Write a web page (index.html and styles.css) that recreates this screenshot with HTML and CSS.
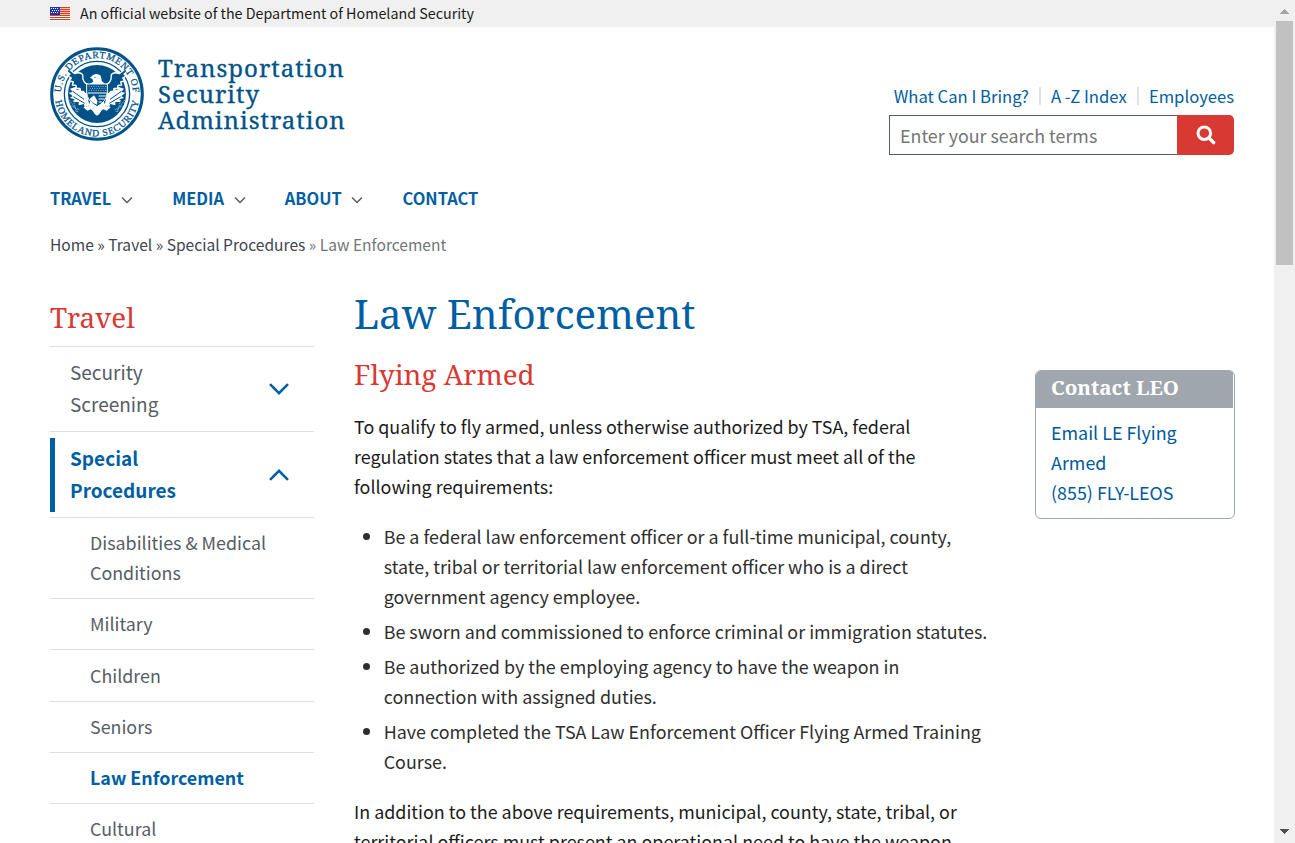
FILE: index.html
```
<!DOCTYPE html>
<html lang="en">
<head>
<meta charset="utf-8">
<title>Law Enforcement | Transportation Security Administration</title>
<link rel="stylesheet" href="styles.css">
</head>
<body>
<div class="viewport">
<div class="page">
  <div class="gov-banner">
    <svg class="flag" viewBox="0 0 20 13" width="20" height="13">
      <rect width="20" height="13" fill="#fff"/>
      <path d="M0 .5h20M0 2.5h20M0 4.5h20M0 6.5h20M0 8.5h20M0 10.5h20M0 12.5h20" stroke="#db3e1f" stroke-width="1"/>
      <path d="M0 1.5h20M0 3.5h20M0 5.5h20M0 7.5h20" stroke="#f7c4bb" stroke-width="1"/>
      <rect width="10" height="8" fill="#1e33b1"/>
      <path d="M1 1.5h8M2 3.5h7M1 5.5h8" stroke="#fff" stroke-width="1" stroke-dasharray="1 1"/>
    </svg>
    <span>An official website of the Department of Homeland Security</span>
  </div>

  <header class="header">
    <a class="brand">
      <svg class="seal" viewBox="14 15 282 282" width="94" height="94">
        <defs>
          <path id="arc-top" d="M47 156a108 108 0 0 1 216 0"/>
          <path id="arc-bottom" d="M28 156a127 127 0 0 0 254 0"/>
        </defs>
        <circle cx="155" cy="156" r="136" fill="#fff" stroke="#005288" stroke-width="9"/>
        <circle cx="155" cy="156" r="98" fill="none" stroke="#005288" stroke-width="4"/>
        <circle cx="155" cy="156" r="87" fill="#005288"/>
        <g id="wing">
          <path d="M124 150L106 140 94 144 92 134 74 140 82 150 70 152 82 162 74 168 88 172 84 180 100 180 100 190 116 186 118 196 132 190Z" fill="#fff"/>
          <path d="M82 148L116 172M84 164L118 184" stroke="#005288" stroke-width="3"/>
          <path d="M68 79L88 95Q104 88 112 98L113 112Q118 126 130 128L132 152 120 156 114 148 106 148 104 139 94 139 92 130 81 129 84 120 72 116 78 108 68 102 74 96 66 90Z" fill="#005288" stroke="#fff" stroke-width="4" stroke-linejoin="round"/>
          <path d="M72 174L100 212M84 174L94 214M74 190L104 204" stroke="#8fb3cb" stroke-width="3" stroke-dasharray="5 3" fill="none"/>
          <path d="M114 196L126 206 136 202 128 192Z" fill="#fff"/>
        </g>
        <use href="#wing" transform="matrix(-1 0 0 1 310 0)"/>
        <path d="M132 126L144 119 141 110 134 108 142 100Q155 92 166 101L170 118 180 126Z" fill="#fff"/>
        <circle cx="149" cy="106" r="2" fill="#005288"/>
        <path d="M134 180L128 196 142 206 148 216 155 221 162 216 168 206 182 196 176 180Z" fill="#fff"/>
        <path d="M124 126H186V150Q185 178 155 194Q125 178 124 150Z" fill="#005288" stroke="#fff" stroke-width="3"/>
        <path d="M130 133H182M133 139H180M130 145H182" stroke="#b9d0df" stroke-width="2.5" stroke-dasharray="3 4"/>
        <path d="M128 153H184M160 162H182M160 171H178M160 180H170" stroke="#fff" stroke-width="3"/>
        <path d="M132 172L146 160 156 176 155 188 142 182Z" fill="#fff"/>
        <g class="seal-text">
          <text><textPath href="#arc-top" startOffset="50%" text-anchor="middle" textLength="330">U.S. DEPARTMENT OF</textPath></text>
          <text><textPath href="#arc-bottom" startOffset="50%" text-anchor="middle" textLength="356">HOMELAND SECURITY</textPath></text>
        </g>
      </svg>
      <span class="brand-name"><span>Transportation</span><span>Security</span><span>Administration</span></span>
    </a>
    <div class="tools">
      <div class="quick-links"><a>What Can I Bring?</a><a>A -Z Index</a><a>Employees</a></div>
      <form class="search">
        <input type="text" placeholder="Enter your search terms">
        <button type="button" aria-label="Search">
          <svg viewBox="0 0 20 20" width="20" height="20"><circle cx="8.3" cy="8.2" r="6.3" fill="none" stroke="#fff" stroke-width="3"/><path d="M13 13L17.7 17.6" stroke="#fff" stroke-width="3.4" stroke-linecap="round"/></svg>
        </button>
      </form>
    </div>
  </header>

  <nav class="main-nav">
    <a>TRAVEL <svg viewBox="0 0 12 8" width="12" height="8"><path d="M1 1.5L6 6.5 11 1.5"/></svg></a>
    <a>MEDIA <svg viewBox="0 0 12 8" width="12" height="8"><path d="M1 1.5L6 6.5 11 1.5"/></svg></a>
    <a>ABOUT <svg viewBox="0 0 12 8" width="12" height="8"><path d="M1 1.5L6 6.5 11 1.5"/></svg></a>
    <a>CONTACT</a>
  </nav>
  <div class="breadcrumb"><a>Home</a> » <a>Travel</a> » <a>Special Procedures</a> <span>» Law Enforcement</span></div>

  <div class="columns">
    <aside class="sidebar">
      <h2>Travel</h2>
      <ul>
        <li class="top"><a>Security Screening</a><svg viewBox="0 0 20 12" width="20" height="12"><path d="M1 1.2L10 10.2 19 1.2"/></svg></li>
        <li class="top open"><a>Special Procedures</a><svg viewBox="0 0 20 12" width="20" height="12"><path d="M1 10.8L10 1.8 19 10.8"/></svg></li>
        <li><a>Disabilities &amp; Medical Conditions</a></li>
        <li><a>Military</a></li>
        <li><a>Children</a></li>
        <li><a>Seniors</a></li>
        <li class="current"><a>Law Enforcement</a></li>
        <li><a>Cultural</a></li>
      </ul>
    </aside>
    <main class="content">
      <h1>Law Enforcement</h1>
      <h2>Flying Armed</h2>
      <p>To qualify to fly armed, unless otherwise authorized by TSA, federal regulation states that a law enforcement officer must meet all of the following requirements:</p>
      <ul>
        <li>Be a federal law enforcement officer or a full-time municipal, county, state, tribal or territorial law enforcement officer who is a direct government agency employee.</li>
        <li>Be sworn and commissioned to enforce criminal or immigration statutes.</li>
        <li>Be authorized by the employing agency to have the weapon in connection with assigned duties.</li>
        <li>Have completed the TSA Law Enforcement Officer Flying Armed Training Course.</li>
      </ul>
      <p>In addition to the above requirements, municipal, county, state, tribal, or territorial officers must present an operational need to have the weapon</p>
    </main>
    <section class="card">
      <h3>Contact LEO</h3>
      <div class="card-body"><a>Email LE Flying Armed</a><a>(855) FLY-LEOS</a></div>
    </section>
  </div>
</div>
<div class="scrollbar">
  <svg viewBox="0 0 9 5" width="9" height="5"><path d="M4 0h1v1h1v1h1v1h1v1h1v1H0V4h1V3h1V2h1V1h1z" fill="#a3a3a3"/></svg>
  <div class="thumb"></div>
  <svg class="down" viewBox="0 0 9 5" width="9" height="5"><path d="M0 0h9v1H8v1H7v1H6v1H5v1H4V4H3V3H2V2H1V1H0z" fill="#505050"/></svg>
</div>
</div>
</body>
</html>
```
FILE: styles.css
```
* { box-sizing: border-box; }
html, body { margin: 0; height: 100%; overflow: hidden; }
body {
  font-family: "Noto Sans CJK SC", "Noto Sans", sans-serif;
  font-size: 17.9px;
  line-height: 30px;
  color: #1b1b1b;
  background: #fff;
}
h1, h2, h3, p, ul { margin: 0; padding: 0; font-weight: 400; }
ul { list-style: none; }
h1, h2, h3, .brand-name { font-family: "Noto Serif", "DejaVu Serif Condensed", serif; }

.viewport { display: flex; height: 843px; overflow: hidden; }
.page { width: 1274px; flex: none; overflow: hidden; }

.gov-banner {
  display: flex; align-items: center; gap: 10px;
  height: 27px; padding-left: 50px;
  background: #f0f0f0; font-size: 14.3px; line-height: 25px;
}
.gov-banner span { padding-bottom: 2px; }

.header { display: flex; justify-content: space-between; height: 128px; padding: 20px 40px 0 50px; }
.brand { display: flex; color: #005288; }
.seal-text { font-family: "Liberation Serif", serif; font-size: 29px; fill: #005288; stroke: #005288; stroke-width: .8; }
.brand-name {
  display: flex; flex-direction: column; padding: 8px 0 0 14px;
  font-size: 24px; line-height: 26px; letter-spacing: 1px;
  -webkit-text-stroke: .3px #005288;
}
.tools { display: flex; flex-direction: column; justify-content: flex-end; width: 345px; }
.quick-links { display: flex; justify-content: flex-end; font-size: 16.65px; line-height: 20px; color: #005ea2; margin-bottom: 9px; }
.quick-links a + a { margin-left: 10.7px; padding-left: 11.5px; background: linear-gradient(#dfe1e2, #dfe1e2) 0 1px / 2px 18px no-repeat; }
.search { display: flex; height: 40px; }
.search input {
  width: 288px; border: 1px solid #565c65; border-right: 0; padding: 0 10px; margin: 0;
  font-family: inherit; font-size: 17.85px; color: #1b1b1b; outline: 0;
}
.search input::placeholder { color: #757575; }
.search button {
  width: 57px; border: 0; border-radius: 0 5px 5px 0; background: #d83933;
  display: flex; align-items: center; justify-content: center; padding: 0;
}

.main-nav { display: flex; gap: 39.1px; padding: 33px 0 0 50px; font-size: 16.45px; font-weight: 700; line-height: 20px; color: #005ea2; }
.main-nav a { display: flex; align-items: center; gap: 9.7px; }
.main-nav svg { margin-top: 3px; fill: none; stroke: #565c65; stroke-width: 1.5; }
.breadcrumb { padding: 25px 0 0 50px; font-size: 15.57px; line-height: 22px; color: #3d4551; }
.breadcrumb span { color: #71767a; }

.columns { display: grid; grid-template-columns: 264px 640px 200px; column-gap: 40px; padding: 35px 0 0 50px; align-items: start; }
.sidebar { font-size: 17.87px; color: #565c65; }
.sidebar h2 { font-size: 27.8px; line-height: 34px; color: #d83933; padding: 10px 0 11.7px; }
.sidebar li { border-top: 1px solid #dcdee0; padding: 9.25px 40px 11px; }
.sidebar .top {
  display: flex; align-items: center; justify-content: space-between;
  font-size: 19px; line-height: 32px; padding: 9.3px 25px 11.3px 20px;
}
.sidebar .top a { width: 130px; }
.sidebar svg { margin-top: 2px; fill: none; stroke: #005ea2; stroke-width: 2.5; }
.sidebar .open {
  background: linear-gradient(#005ea2, #005ea2) 0 6px / 5px 74px no-repeat;
  font-weight: 700; color: #005ea2;
}
.sidebar .current { font-weight: 700; color: #005ea2; }

.content h1 { font-size: 40.2px; line-height: 48px; color: #005ea2; }
.content h2 { font-size: 27.8px; line-height: 36px; color: #d83933; margin: 18px 0 19px; }
.content ul { margin: 20px 0; padding-left: 29.7px; color: #2e2e2e; list-style: disc; }
.content li + li { margin-top: 5px; }

.card { margin: 80px 0 0 1px; width: 200px; height: 149px; border: 1px solid #9fa6ae; border-radius: 6px; overflow: hidden; }
.card h3 { background: #9fa6ae; color: #fff; font-size: 20.5px; font-weight: 700; line-height: 33px; width: 197px; height: 37px; padding-left: 15px; }
.card-body { display: flex; flex-direction: column; padding: 9px 15px; color: #00599c; }

.scrollbar { width: 21px; display: flex; flex-direction: column; align-items: center; background: #f0f0f0; padding: 9px 0 9px; }
.thumb { width: 17px; height: 244px; flex: none; margin-top: 7px; background: #c1c1c1; }
.scrollbar .down { margin-top: auto; }
```
